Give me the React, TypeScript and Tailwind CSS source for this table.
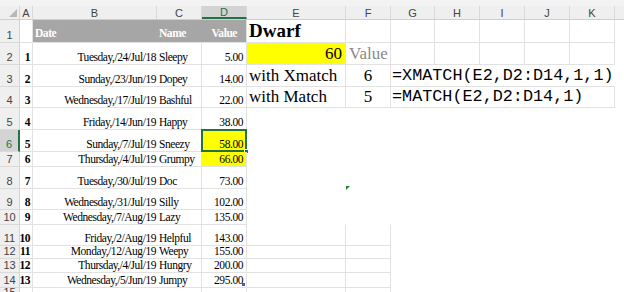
import React from 'react';
import clsx from 'clsx';

const serif = "font-['Liberation_Serif','Times_New_Roman',serif]";
const mono = "font-['Liberation_Mono','Courier_New',monospace]";
const sans = "font-['Liberation_Sans',Arial,sans-serif]";

// column widths A..K, L takes what is left
const COLS = ['A', 'B', 'C', 'D', 'E', 'F', 'G', 'H', 'I', 'J', 'K'];
const WIDTHS = [
  'w-[13px]', 'w-[124px]', 'w-[45px]', 'w-[45px]', 'w-[99px]', 'w-[45px]',
  'w-[44px]', 'w-[45px]', 'w-[45px]', 'w-[45px]', 'w-[45px]',
];
const HEIGHTS = [
  'h-[23px]', 'h-[22px]', 'h-[22px]', 'h-[21px]', 'h-[22px]', 'h-[22px]', 'h-[15px]',
  'h-[22px]', 'h-[21px]', 'h-[15px]', 'h-[21px]', 'h-[13px]', 'h-[14px]', 'h-[15px]', 'h-[12px]',
];

const DATA: [string, string, string][] = [
  ['Tuesday,/24/Jul/18', 'Sleepy', '5.00'],
  ['Sunday,/23/Jun/19', 'Dopey', '14.00'],
  ['Wednesday,/17/Jul/19', 'Bashful', '22.00'],
  ['Friday,/14/Jun/19', 'Happy', '38.00'],
  ['Sunday,/7/Jul/19', 'Sneezy', '58.00'],
  ['Thursday,/4/Jul/19', 'Grumpy', '66.00'],
  ['Tuesday,/30/Jul/19', 'Doc', '73.00'],
  ['Wednesday,/31/Jul/19', 'Silly', '102.00'],
  ['Wednesday,/7/Aug/19', 'Lazy', '135.00'],
  ['Friday,/2/Aug/19', 'Helpful', '143.00'],
  ['Monday,/12/Aug/19', 'Weepy', '155.00'],
  ['Thursday,/4/Jul/19', 'Hungry', '200.00'],
  ['Wednesday,/5/Jun/19', 'Jumpy', '295.00'],
];

type CellProps = {
  col: number;
  r?: boolean;
  b?: boolean;
  className?: string;
  children?: React.ReactNode;
};

const Cell = ({ col, r = true, b = true, className, children }: CellProps) => (
  <div
    className={clsx(
      'relative shrink-0 flex items-end whitespace-nowrap overflow-visible',
      WIDTHS[col],
      r && 'border-r border-r-[#e2e2e2]',
      b && 'border-b border-b-[#e2e2e2]',
      className,
    )}
  >
    {children}
  </div>
);

const small = `${serif} text-[11.5px] leading-[13px] tracking-[-0.45px] text-black`;
const big = `${serif} text-[17px] leading-[20px] text-black`;

const ColumnHeader = () => (
  <div className="flex h-[20px] flex-col">
    <div className="h-[6px] bg-[#f3f3f3]" />
    <div className={clsx('flex h-[14px] bg-[#efefef] border-b border-[#cfcfcf] text-[11px] leading-[12px] text-[#444]', sans)}>
      <div className="relative w-[20px] shrink-0 border-r border-[#d4d4d4]">
        <svg className="absolute right-[2px] bottom-[2px]" width="8" height="8" viewBox="0 0 8 8">
          <path d="M8 0 L8 8 L0 8 Z" fill="#b8b8b8" />
        </svg>
      </div>
      {COLS.map((c, i) => (
        <div
          key={c}
          className={clsx(
            'shrink-0 flex items-center justify-center border-r border-[#d9d9d9]',
            WIDTHS[i],
            c === 'D' && 'bg-[#d3d3d3] text-[#217346] border-b-2 border-b-[#217346]',
          )}
        >
          {c}
        </div>
      ))}
      <div className="flex-1" />
    </div>
  </div>
);

const RowHeader = ({ n, active }: { n: number; active?: boolean }) => (
  <div
    className={clsx(
      'w-[20px] shrink-0 flex items-end justify-center pb-[1px] border-b border-[#dadada] text-[11px] leading-[12px]',
      sans,
      active ? 'bg-[#d3d3d3] text-[#217346] border-r-2 border-r-[#217346]' : 'bg-[#efefef] text-[#444] border-r border-r-[#d4d4d4]',
    )}
  >
    {n}
  </div>
);

// columns E..K for each row
const rightPart = (row: number) => {
  const cols = [4, 5, 6, 7, 8, 9, 10];
  if (row === 1) {
    return cols.map((c) => (
      <Cell key={c} col={c} className="pl-[2px]">
        {c === 4 && <span className={`${serif} text-[19px] leading-[22px] font-bold text-black`}>Dwarf</span>}
      </Cell>
    ));
  }
  if (row === 2) {
    return cols.map((c) => (
      <Cell key={c} col={c} className={clsx(c === 4 && 'bg-[#ffff00] justify-end pr-[3px]', c === 5 && 'pl-[3px]')}>
        {c === 4 && <span className={`${big} leading-[21px]`}>60</span>}
        {c === 5 && <span className={`${serif} text-[17px] leading-[21px] text-[#8a8a8a]`}>Value</span>}
      </Cell>
    ));
  }
  if (row === 3 || row === 4) {
    const label = row === 3 ? 'with Xmatch' : 'with Match';
    const num = row === 3 ? '6' : '5';
    const formula = row === 3 ? '=XMATCH(E2,D2:D14,1,1)' : '=MATCH(E2,D2:D14,1)';
    return cols.map((c) => (
      <Cell
        key={c}
        col={c}
        r={c <= 5 || (row === 4 && c === 10)}
        className={clsx(c === 4 && 'pl-[2px]', c === 5 && 'justify-center', c === 6 && 'pl-[1px]')}
      >
        {c === 4 && <span className={big}>{label}</span>}
        {c === 5 && <span className={big}>{num}</span>}
        {c === 6 && <span className={`${mono} text-[16.8px] leading-[20px] text-black`}>{formula}</span>}
      </Cell>
    ));
  }
  if (row >= 11 && row <= 14) {
    return cols.map((c) => <Cell key={c} col={c} r={c <= 5} b={c <= 5} className="border-[#efefef]" />);
  }
  return cols.map((c) => <Cell key={c} col={c} r={false} b={false} />);
};

const DataRow = ({ row }: { row: number }) => {
  const d = DATA[row - 2];
  return (
    <div className={clsx('flex', HEIGHTS[row - 1])}>
      <RowHeader n={row} active={row === 6} />
      {row === 1 ? (
        <>
          <Cell col={0} />
          <Cell col={1} r={false} className="bg-[#a6a6a6] pl-[2px] pb-[2px]">
            <span className={`${small} font-bold text-white`}>Date</span>
          </Cell>
          <Cell col={2} r={false} className="bg-[#a6a6a6] pl-[2px] pb-[2px]">
            <span className={`${small} font-bold text-white`}>Name</span>
          </Cell>
          <Cell col={3} className="bg-[#a6a6a6] justify-end pr-[9px] pb-[2px]">
            <span className={`${small} font-bold text-white`}>Value</span>
          </Cell>
        </>
      ) : d ? (
        <>
          <Cell col={0} className="justify-end pr-[2px]">
            <span className={`${small} font-bold`}>{row - 1}</span>
          </Cell>
          <Cell col={1} r={false} className="justify-end pr-[1px]">
            <span className={small}>{d[0]}</span>
          </Cell>
          <Cell col={2} className="pl-[2px]">
            <span className={small}>{d[1]}</span>
          </Cell>
          <Cell col={3} className={clsx('justify-end pr-[3px]', (row === 6 || row === 7) && 'bg-[#ffff00]')}>
            {row === 6 && (
              <>
                <div className="absolute -left-px -top-px right-[-1px] bottom-[-1px] border-2 border-[#217346]" />
                <div className="absolute right-[-3px] bottom-[-3px] h-[5px] w-[5px] bg-[#217346] border border-white" />
              </>
            )}
            <span className={small}>{d[2]}</span>
            {row === 14 && <div className="absolute right-[1px] bottom-[1px] h-[3px] w-[3px] bg-[#4a5fa8]" />}
          </Cell>
        </>
      ) : (
        <>
          <Cell col={0} />
          <Cell col={1} r={false} />
          <Cell col={2} />
          <Cell col={3} />
        </>
      )}
      {row <= 14 ? rightPart(row) : [4, 5, 6, 7, 8, 9, 10].map((c) => <Cell key={c} col={c} r={c <= 5} b={false} className="border-[#efefef]" />)}
      <div className="flex-1" />
    </div>
  );
};

export default function App() {
  return (
    <div className="relative h-[292px] w-[624px] overflow-hidden bg-white">
      <ColumnHeader />
      {Array.from({ length: 15 }, (_, i) => (
        <DataRow key={i} row={i + 1} />
      ))}
      {/* stray error marker left on the sheet */}
      <svg className="absolute left-[346px] top-[186px]" width="4" height="4" viewBox="0 0 4 4">
        <path d="M0 0 L4 0 L0 4 Z" fill="#1f8a2e" />
      </svg>
    </div>
  );
}
